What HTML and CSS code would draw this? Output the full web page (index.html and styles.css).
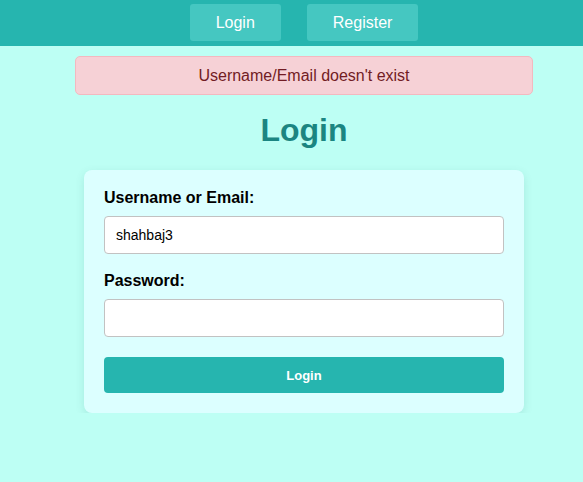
FILE: index.html
```html
<!DOCTYPE html>
<html lang="en">
<head>
<meta charset="utf-8">
<title>Login</title>
<link rel="stylesheet" href="styles.css">
</head>
<body>
<nav class="topnav">
  <a class="nav-btn" href="#">Login</a>
  <a class="nav-btn" href="#">Register</a>
</nav>
<main class="main">
  <div class="alert">Username/Email doesn't exist</div>
  <h1 class="title">Login</h1>
  <form class="card">
    <div class="field">
      <label class="label" for="user">Username or Email:</label>
      <input class="input" id="user" type="text" value="shahbaj3">
    </div>
    <div class="field">
      <label class="label" for="pass">Password:</label>
      <input class="input" id="pass" type="password">
    </div>
    <button class="submit" type="button">Login</button>
  </form>
</main>
</body>
</html>
```

FILE: styles.css
```css
* { box-sizing: border-box; }

html, body {
  margin: 0;
  padding: 0;
}

body {
  background: #bdfff4;
  font-family: "Liberation Sans", Arial, Helvetica, sans-serif;
  color: #000;
}

.topnav {
  background: #26b5af;
  height: 46px;
  padding: 4px 0 0 25px;
  display: flex;
  justify-content: center;
  align-items: flex-start;
  gap: 26px;
}

.nav-btn {
  display: block;
  height: 37px;
  padding: 0 26px;
  line-height: 37px;
  background: #45c7c1;
  color: #fff;
  font-size: 16px;
  text-decoration: none;
  border-radius: 3px;
}

.main {
  padding-left: 25px;
  display: flex;
  flex-direction: column;
  align-items: center;
}

.alert {
  margin-top: 10px;
  width: 458px;
  height: 39px;
  background: #f6d1d6;
  border: 1px solid #f3b9c0;
  border-radius: 5px;
  color: #721c24;
  font-size: 16px;
  line-height: 37px;
  text-align: center;
}

.title {
  margin: 17px 0 21px;
  font-size: 32px;
  line-height: 37px;
  font-weight: bold;
  color: #1b8581;
}

.card {
  width: 440px;
  background: #dcffff;
  border-radius: 8px;
  padding: 19px 20px 20px;
  box-shadow: 0 3px 10px rgba(0, 80, 80, 0.12);
  display: flex;
  flex-direction: column;
}

.field {
  display: flex;
  flex-direction: column;
  margin-bottom: 18px;
}

.field + .field { margin-bottom: 20px; }

.label {
  font-size: 16px;
  line-height: 18px;
  font-weight: bold;
  margin-bottom: 9px;
}

.input {
  height: 38px;
  width: 100%;
  border: 1px solid #c2c2c2;
  border-radius: 4px;
  background: #fff;
  padding: 0 11px;
  font-family: "Liberation Sans", Arial, sans-serif;
  font-size: 14px;
  color: #000;
  outline: none;
}

.submit {
  height: 36px;
  width: 100%;
  border: none;
  border-radius: 4px;
  background: #26b5af;
  color: #fff;
  font-family: "Liberation Sans", Arial, sans-serif;
  font-size: 13px;
  font-weight: bold;
  cursor: pointer;
}
```
